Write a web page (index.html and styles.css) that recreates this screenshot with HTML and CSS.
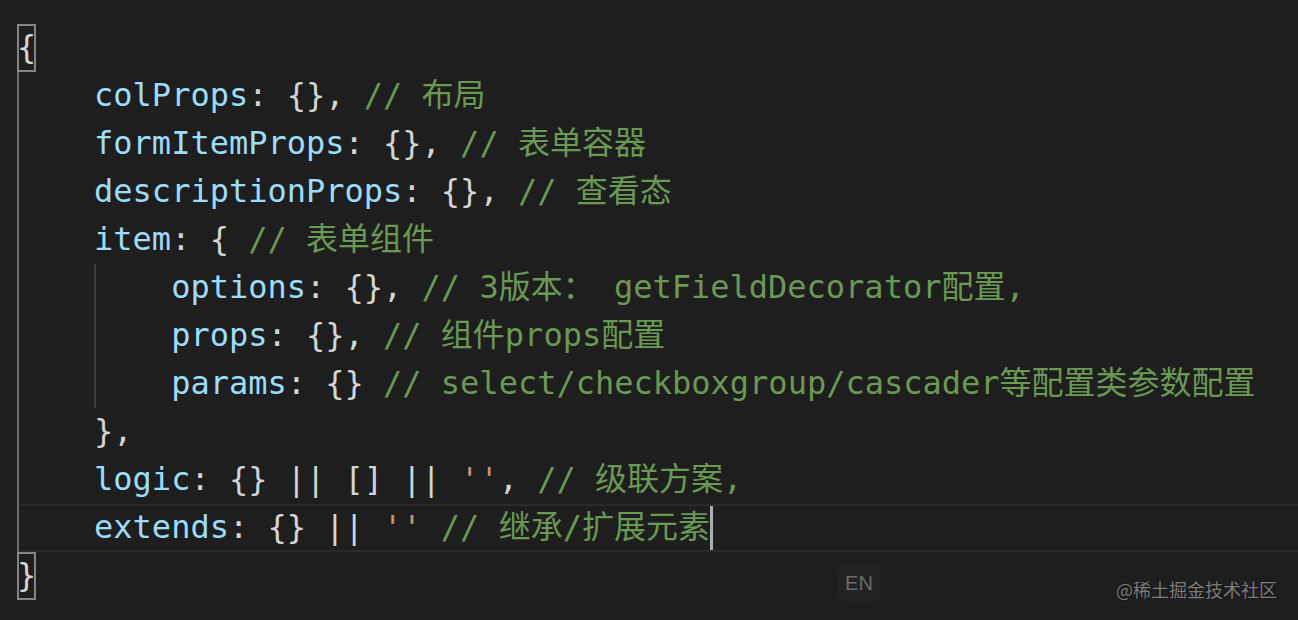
FILE: index.html
```html
<!DOCTYPE html>
<html lang="zh">
<head>
<meta charset="utf-8">
<title>Editor</title>
<link rel="stylesheet" href="styles.css">
</head>
<body>
<div class="editor">
  <div class="line"><span class="p match">{</span></div>
  <div class="block outer">
    <div class="line"><span class="k">colProps</span><span class="p">: {}, </span><span class="c">// 布局</span></div>
    <div class="line"><span class="k">formItemProps</span><span class="p">: {}, </span><span class="c">// 表单容器</span></div>
    <div class="line"><span class="k">descriptionProps</span><span class="p">: {}, </span><span class="c">// 查看态</span></div>
    <div class="line"><span class="k">item</span><span class="p">: { </span><span class="c">// 表单组件</span></div>
    <div class="block inner">
      <div class="line"><span class="k">options</span><span class="p">: {}, </span><span class="c">// 3版本： getFieldDecorator配置,</span></div>
      <div class="line"><span class="k">props</span><span class="p">: {}, </span><span class="c">// 组件props配置</span></div>
      <div class="line"><span class="k">params</span><span class="p">: {} </span><span class="c">// select/checkboxgroup/cascader等配置类参数配置</span></div>
    </div>
    <div class="line"><span class="p">},</span></div>
    <div class="line"><span class="k">logic</span><span class="p">: {} || [] || </span><span class="s">''</span><span class="p">, </span><span class="c">// 级联方案,</span></div>
    <div class="line current"><span class="k">extends</span><span class="p">: {} || </span><span class="s">''</span><span class="p"> </span><span class="c">// 继承/扩展元素</span><span class="cursor"></span></div>
  </div>
  <div class="line"><span class="p match">}</span></div>
  <div class="ime">EN</div>
  <div class="watermark">@稀土掘金技术社区</div>
</div>
</body>
</html>
```
FILE: styles.css
```css
html, body {
  margin: 0;
  padding: 0;
  background: #1e1e1e;
  width: 1298px;
  height: 620px;
  overflow: hidden;
}

.editor {
  position: relative;
  height: 620px;
  box-sizing: border-box;
  padding: 24px 0 0 17px;
  font-family: "DejaVu Sans Mono", "Noto Sans CJK SC", monospace;
  font-size: 32px;
  color: #d4d4d4;
}

.line {
  height: 48px;
  line-height: 46px;
  white-space: pre;
}

.block {
  padding-left: 4ch;
}

.outer {
  box-shadow: inset 2px 0 0 #6f6f6f;
}

.inner {
  box-shadow: inset 2px 0 0 #3c3c3c;
}

.k { color: #9cdcfe; }
.p { color: #d4d4d4; }
.c { color: #6a9955; }
.s { color: #ce9178; }

.match {
  display: inline-block;
  height: 48px;
  vertical-align: top;
  box-sizing: border-box;
  box-shadow: inset 0 0 0 2px #858585;
}

.current {
  margin-left: calc(-4ch + 2px);
  padding-left: calc(4ch - 2px);
  box-sizing: border-box;
  border-top: 2px solid #2a2a2a;
  border-bottom: 2px solid #2a2a2a;
  line-height: 42px;
}

.cursor {
  display: inline-block;
  width: 3px;
  height: 44px;
  vertical-align: top;
  background: #aeafad;
}

.ime {
  position: absolute;
  left: 838px;
  top: 564px;
  width: 42px;
  height: 38px;
  border-radius: 6px;
  background: #222222;
  color: #6b6b6b;
  font-family: "Liberation Sans", "Noto Sans", sans-serif;
  font-size: 20px;
  line-height: 38px;
  text-align: center;
}

.watermark {
  position: absolute;
  left: 1116px;
  top: 577px;
  color: #7c7c7c;
  font-family: "Noto Sans CJK SC", "Noto Sans", sans-serif;
  font-size: 18px;
  line-height: 24px;
  text-shadow: 0 0 2px rgba(0, 0, 0, 0.6);
}
```
